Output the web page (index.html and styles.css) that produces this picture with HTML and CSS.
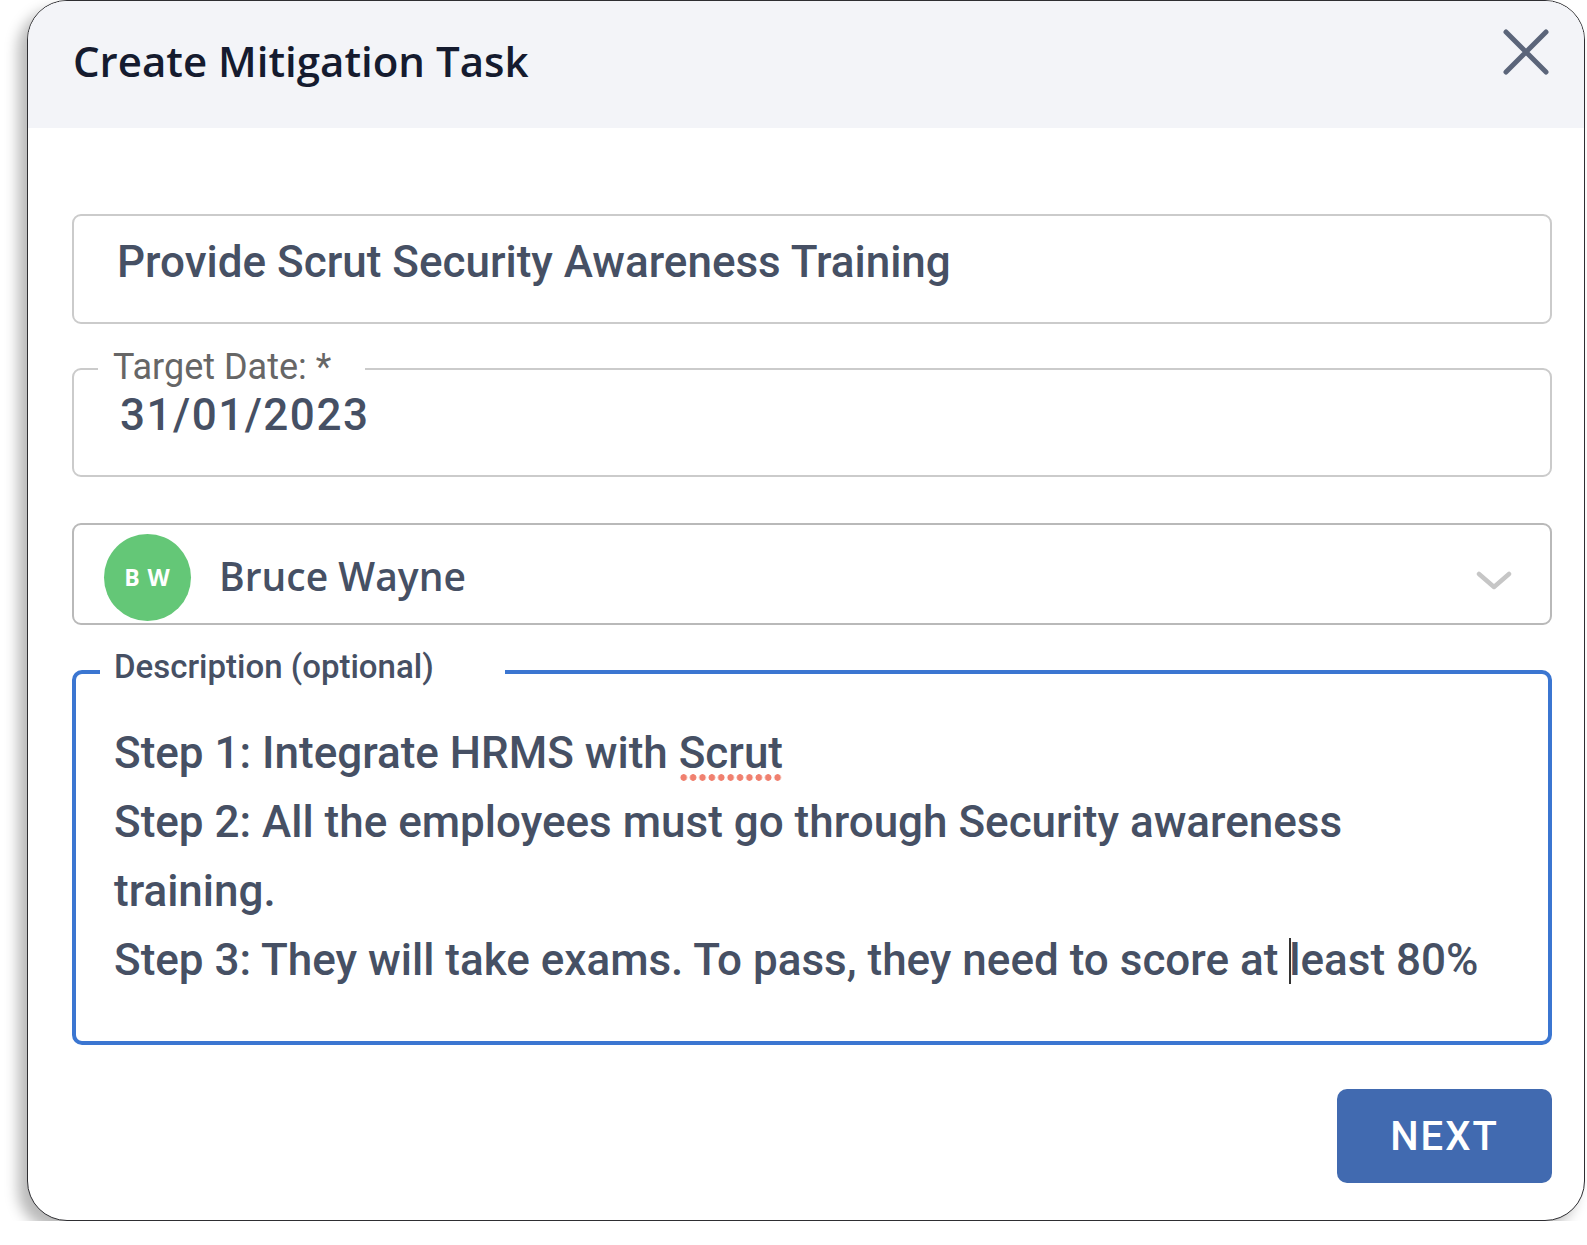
FILE: index.html
```html
<!DOCTYPE html>
<html lang="en">
<head>
    <meta charset="UTF-8">
    <meta name="viewport" content="width=device-width, initial-scale=1.0">
    <title>Create Mitigation Task</title>
    <link rel="stylesheet" href="styles.css">
</head>
<body>

<div class="dialog">
    <div class="dialog-header">
        <h1 class="dialog-title">Create Mitigation Task</h1>
        <button class="close-button" aria-label="Close">
            <svg width="46" height="46" viewBox="0 0 46 46">
                <path d="M3 3 L43 43 M43 3 L3 43" stroke="#5b657a" stroke-width="5" stroke-linecap="round" fill="none"/>
            </svg>
        </button>
    </div>

    <div class="dialog-body">
        <div class="text-field">Provide Scrut Security Awareness Training</div>

        <fieldset class="date-field">
            <legend>Target Date: *</legend>
            <div class="date-value">31/01/2023</div>
        </fieldset>

        <div class="select-field">
            <div class="avatar">B W</div>
            <div class="select-name">Bruce Wayne</div>
            <svg class="chevron" width="36" height="20" viewBox="0 0 36 20">
                <polyline points="3,3 18,16 33,3" stroke="#c6c6c6" stroke-width="4.5" stroke-linecap="round" stroke-linejoin="round" fill="none"/>
            </svg>
        </div>

        <fieldset class="description-field">
            <legend>Description (optional)</legend>
            <div class="description-text">
                <div>Step 1: Integrate HRMS with <span class="misspelled">Scrut</span></div>
                <div>Step 2: All the employees must go through Security awareness<br>training.</div>
                <div>Step 3: They will take exams. To pass, they need to score at <span class="caret"></span>least 80%</div>
            </div>
        </fieldset>

        <div class="actions">
            <button class="next-button">NEXT</button>
        </div>
    </div>
</div>

</body>
</html>
```

FILE: styles.css
```css
body {
    margin: 0;
    padding: 0;
    background-color: #fff;
    font-family: 'Roboto', 'Liberation Sans', sans-serif;
}

.dialog {
    box-sizing: border-box;
    width: 1558px;
    height: 1221px;
    margin-left: 27px;
    border: 1.5px solid #2e2e32;
    border-radius: 40px;
    overflow: hidden;
    background-color: #fff;
    box-shadow: -9px 9px 14px rgba(0, 0, 0, 0.28);
}

.dialog-header {
    display: flex;
    justify-content: space-between;
    align-items: flex-start;
    height: 127px;
    box-sizing: border-box;
    padding: 28px 35px 0 45px;
    background-color: #f3f4f8;
}

.dialog-title {
    margin: 4px 0 0 0;
    font-family: 'Open Sans', sans-serif;
    font-weight: 600;
    font-size: 42px;
    line-height: 56px;
    color: #151b2f;
}

.close-button {
    background: none;
    border: none;
    padding: 0;
    cursor: pointer;
    line-height: 0;
}

.dialog-body {
    display: flex;
    flex-direction: column;
    padding: 86px 32px 0 44px;
    color: #465064;
}

/* title input */
.text-field {
    box-sizing: border-box;
    height: 110px;
    border: 2px solid #cbcbcb;
    border-radius: 9px;
    padding: 20px 0 0 43px;
    font-size: 44px;
    font-weight: 500;
    line-height: 52px;
}

/* outlined fields with a notch */
fieldset {
    margin: 0;
    min-width: 0;
}

.date-field {
    margin-top: 25px;
    height: 128px;
    box-sizing: border-box;
    border: 2px solid #cbcbcb;
    border-radius: 9px;
    padding: 0 0 0 44px;
}

.date-field legend {
    margin-left: -20px;
    padding: 0 34px 4px 15px;
    font-size: 36px;
    line-height: 36px;
    color: #666;
}

.date-value {
    font-size: 44px;
    font-weight: 500;
    line-height: 52px;
    letter-spacing: 1.5px;
    margin-left: 2px;
}

.select-field {
    display: flex;
    align-items: center;
    box-sizing: border-box;
    height: 102px;
    margin-top: 46px;
    border: 2px solid #b9b9b9;
    border-radius: 9px;
    padding: 6px 38px 0 30px;
}

.avatar {
    width: 87px;
    height: 87px;
    border-radius: 50%;
    background-color: #64c777;
    color: #fff;
    display: flex;
    align-items: center;
    justify-content: center;
    font-family: 'Open Sans', sans-serif;
    font-weight: 700;
    font-size: 23px;
    letter-spacing: 1px;
    flex-shrink: 0;
}

.select-name {
    flex: 1;
    margin-left: 28px;
    margin-top: -4px;
    font-family: 'Open Sans', sans-serif;
    font-weight: 600;
    font-size: 39px;
}

.chevron {
    margin-top: 8px;
}

.description-field {
    margin-top: 24px;
    box-sizing: border-box;
    height: 396px;
    border: 4px solid #3b76d1;
    border-radius: 10px;
    padding: 0 20px 0 38px;
}

.description-field legend {
    margin-left: -14px;
    padding: 0 71px 10px 14px;
    font-size: 33px;
    font-weight: 500;
    line-height: 36px;
}

.description-text {
    padding-top: 24px;
    font-size: 44px;
    font-weight: 500;
    line-height: 69px;
    white-space: nowrap;
}

.misspelled {
    padding-bottom: 2px;
    background-image: radial-gradient(circle, #f0806f 3px, transparent 3.6px);
    background-size: 9.4px 7px;
    background-repeat: repeat-x;
    background-position: left bottom;
}

.caret {
    display: inline-block;
    width: 2px;
    height: 46px;
    margin-right: -2px;
    vertical-align: -9px;
    background-color: #333;
}

.actions {
    display: flex;
    justify-content: flex-end;
    margin-top: 44px;
}

.next-button {
    width: 215px;
    height: 94px;
    border: none;
    border-radius: 10px;
    background-color: #416ab0;
    color: #fff;
    font-family: 'Roboto', sans-serif;
    font-weight: 500;
    font-size: 40px;
    letter-spacing: 2px;
    cursor: pointer;
}
```
